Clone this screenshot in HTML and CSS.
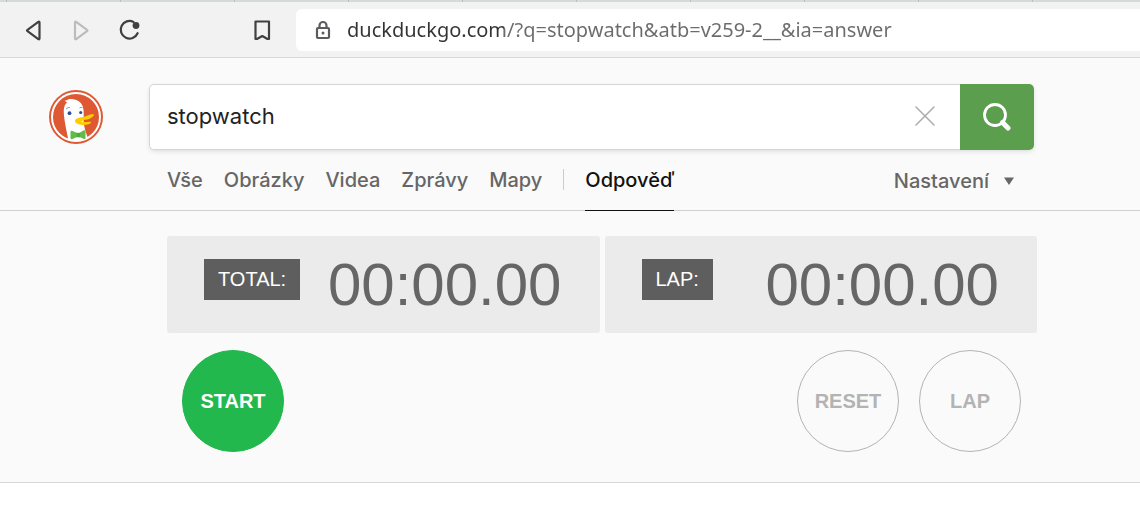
FILE: index.html
```html
<!DOCTYPE html>
<html lang="cs">
<head>
    <meta charset="UTF-8">
    <meta name="viewport" content="width=device-width, initial-scale=1.0">
    <title>stopwatch</title>
    <link rel="stylesheet" href="styles.css">
</head>
<body>
    <div class="browser">
        <div class="tab-strip"></div>
        <div class="toolbar">
            <div class="nav-buttons">
                <button class="icon-button" aria-label="Back">
                    <svg width="24" height="24" viewBox="0 0 24 24" fill="none" stroke="#404040" stroke-width="2.2" stroke-linejoin="round"><path d="M17.500 4.500v16q0 1.300-1.200.6L5.500 13.200q-1-.7 0-1.400L16.300 3.900q1.200-.7 1.200.6z"/></svg>
                </button>
                <button class="icon-button" aria-label="Forward" disabled>
                    <svg width="24" height="24" viewBox="0 0 24 24" fill="none" stroke="#bcbcbc" stroke-width="2.2" stroke-linejoin="round"><path d="M5 4.500v16q0 1.300 1.200.6L17 13.200q1-.7 0-1.400L6.200 3.900Q5 3.200 5 4.500z"/></svg>
                </button>
                <button class="icon-button" aria-label="Reload">
                    <svg width="24" height="24" viewBox="0 0 24 24" fill="none" stroke="#404040" stroke-width="2.200"><path d="M15.500 3.900A8.800 8.800 0 1 0 19.600 15.200" stroke-linecap="round"/><circle cx="18" cy="7.500" r="3.400" fill="#404040" stroke="none"/></svg>
                </button>
            </div>
            <button class="icon-button" aria-label="Bookmark">
                <svg width="24" height="24" viewBox="0 0 24 24" fill="none" stroke="#404040" stroke-width="2.200" stroke-linejoin="round"><path d="M4.500 3.500h13.500v17.500h-1.500L11.300 18 6 21H4.500z"/></svg>
            </button>
            <div class="address-bar">
                <svg width="16" height="20" viewBox="0 0 16 20" fill="none" stroke="#5c5c60" stroke-width="2.200"><rect x="2" y="8" width="12" height="10" rx="1"/><path d="M4.500 8V5.500a3.500 3.500 0 0 1 7 0V8"/><circle cx="8" cy="13" r="1.500" fill="#5c5c60" stroke="none"/></svg>
                <input class="address-input" type="text" aria-label="Address" value="duckduckgo.com/?q=stopwatch&amp;atb=v259-2__&amp;ia=answer">
            </div>
        </div>
    </div>

    <header class="header">
        <a class="logo" href="#" aria-label="DuckDuckGo">
            <svg width="54" height="54" viewBox="0 0 54 54">
                <circle cx="27" cy="27" r="27" fill="#de5833"/>
                <circle cx="27" cy="27" r="24" fill="none" stroke="#fff" stroke-width="2"/>
                <path d="M19.500 50.500C17 38 14.500 27 14.800 20c.2-3.500 1.400-6 3.200-7.500-.6-.8-1.500-1.200-2.500-1.500 1.500-1 3.500-1.200 5-.8-.6-.5-1.200-.8-2-1 7-.8 13 1.300 15.300 7.300 1.200 3.500 1 9 .7 14.500.5 6 2 11 4.500 17.500-6 3-13 4-19.500 2z" fill="#fff"/>
                <path d="M26 31c0-2.500 4.500-3.700 8-4 4-.6 6.500-3 9.500-3 3 .5.500 3-2 4.200-3 1.400-7 1.800-9.500 3.300 3.500 1.300 6.500 0 9.500.3 2 1-2 3.200-6 3.200-4.500 0-9.500-1.300-9.500-4z" fill="#fc0"/>
                <circle cx="20.500" cy="23.200" r="1.900" fill="#2d4f8e"/>
                <circle cx="31.700" cy="22.500" r="1.600" fill="#2d4f8e"/>
                <path d="M17 19q2-2 4-1.500M30.500 18q1.500-1.200 3-.3" fill="none" stroke="#8aa0c8"/>
                <path d="M21.500 42q0-2 2-1l4 1.700h3l4-2.200q2-.8 2 1v7q-1 1-2 .2L30.500 47H28l-4.500 2q-2 .5-2-1z" fill="#63bb47"/>
                <path d="M27.500 43h3.500v4.300h-3.500z" fill="#4dab3e"/>
            </svg>
        </a>
        <div class="header-main">
            <form class="search">
                <input class="search-input" type="text" name="q" aria-label="Search" value="stopwatch">
                <button class="search-clear" type="reset" aria-label="Clear">
                    <svg width="20" height="20" viewBox="0 0 20 20" stroke="#aaa" stroke-width="1.500" stroke-linecap="round"><path d="M1 1l18 18M19 1L1 19"/></svg>
                </button>
                <button class="search-submit" type="submit" aria-label="Search">
                    <svg width="28" height="28" viewBox="0 0 28 28" fill="none" stroke="#fff"><circle cx="12" cy="12" r="10.500" stroke-width="2.800"/><path d="M19.500 19.500l5.500 5.500" stroke-width="5" stroke-linecap="round"/></svg>
                </button>
            </form>
            <nav class="tabs">
                <a href="#">Vše</a>
                <a href="#">Obrázky</a>
                <a href="#">Videa</a>
                <a href="#">Zprávy</a>
                <a href="#">Mapy</a>
                <span class="divider"></span>
                <a class="active" href="#">Odpověď</a>
                <button class="settings" type="button">
                    Nastavení
                    <svg width="10" height="8" viewBox="0 0 10 8" fill="#666"><path d="M0 .5h10L5 8z"/></svg>
                </button>
            </nav>
        </div>
    </header>

    <main class="answer">
        <div class="stopwatch">
            <div class="displays">
                <div class="display">
                    <span class="display-label">TOTAL:</span>
                    <span class="time">00:00.00</span>
                </div>
                <div class="display">
                    <span class="display-label">LAP:</span>
                    <span class="time">00:00.00</span>
                </div>
            </div>
            <div class="controls">
                <button class="round-button start">START</button>
                <button class="round-button" disabled>RESET</button>
                <button class="round-button" disabled>LAP</button>
            </div>
        </div>
    </main>
</body>
</html>
```

FILE: styles.css
```css
* {
    box-sizing: border-box;
}
body {
    margin: 0;
    background-color: #fff;
    font-family: "Liberation Sans", Arial, sans-serif;
    color: #333;
}
button {
    font-family: inherit;
    padding: 0;
    border: none;
    background: none;
    cursor: pointer;
}
svg {
    display: block;
    flex-shrink: 0;
}

/* Browser chrome */
.browser {
    background-color: #f2f2f2;
    border-bottom: 1px solid #d5d7d8;
}
.tab-strip {
    height: 2px;
    background-image: linear-gradient(to right, #b9bec0 1px, #d5dadd 1px);
    background-size: 114px 2px;
    background-position: 6px 0;
}
.toolbar {
    display: flex;
    align-items: center;
    height: 55px;
    padding-left: 22px;
}
.nav-buttons {
    display: flex;
    gap: 24px;
    margin-right: 109px;
}
.address-bar {
    display: flex;
    flex: 1;
    align-items: center;
    gap: 16px;
    height: 42px;
    margin-left: 21px;
    padding-left: 19px;
    border-radius: 6px 0 0 6px;
    background-color: #fff;
}
.address-input {
    flex: 1;
    min-width: 0;
    padding: 0;
    border: none;
    outline: none;
    font-family: "Noto Sans", "Open Sans", sans-serif;
    font-size: 20px;
    line-height: 28px;
    /* dark host name, lighter path */
    background: linear-gradient(to right, #333 157px, #6b6b6b 157px);
    -webkit-background-clip: text;
    background-clip: text;
    color: transparent;
}

/* Search header */
.header {
    display: flex;
    padding: 26px 106px 0 49px;
    background-color: #fafafa;
    border-bottom: 1px solid #d0d0d0;
    font-family: Inter, "Open Sans", sans-serif;
}
.logo {
    margin: 6px 46px 0 0;
}
.header-main {
    flex: 1;
    max-width: 885px;
}
.search {
    display: flex;
    height: 66px;
    border-radius: 5px;
    background-color: #fff;
    box-shadow: 0 2px 4px rgba(0, 0, 0, 0.1);
}
.search-input {
    flex: 1;
    min-width: 0;
    padding: 0 17px 2px;
    border: 1px solid #d5d5d5;
    border-right: none;
    border-radius: 5px 0 0 5px;
    outline: none;
    background-color: #fff;
    color: #222;
    font-family: inherit;
    font-size: 22px;
}
.search-clear {
    display: flex;
    align-items: center;
    justify-content: center;
    width: 70px;
    padding-bottom: 2px;
    border: 1px solid #d5d5d5;
    border-width: 1px 0;
}
.search-submit {
    display: flex;
    align-items: center;
    justify-content: center;
    width: 74px;
    border-radius: 0 5px 5px 0;
    background-color: #5b9e4d;
}
.tabs {
    display: flex;
    gap: 21px;
    height: 61px;
    margin-bottom: -1px;
    padding: 0 20px 0 18px;
    font-size: 20px;
    font-weight: 500;
    line-height: 61px;
}
.tabs a {
    color: #666;
    text-decoration: none;
}
.tabs .active {
    color: #111;
    border-bottom: 1px solid #111;
}
.divider {
    width: 1px;
    height: 21px;
    margin-top: 19px;
    background-color: #ccc;
}
.settings {
    display: flex;
    align-items: center;
    gap: 15px;
    margin-left: auto;
    color: #666;
    font-size: inherit;
    font-weight: inherit;
}

/* Stopwatch */
.answer {
    padding: 25px 103px 30px 167px;
    background-color: #fafafa;
    border-bottom: 1px solid #d8d8d8;
}
.stopwatch {
    max-width: 870px;
}
.displays {
    display: flex;
    gap: 5px;
}
.display {
    display: flex;
    flex: 1;
    justify-content: space-between;
    align-items: flex-start;
    padding: 23px 38px 23px 37px;
    border-radius: 3px;
    background-color: #ebebeb;
}
.display-label {
    padding: 0 14px;
    background-color: #5e5e5e;
    color: #fff;
    font-size: 20px;
    line-height: 41px;
}
.time {
    color: #666;
    font-size: 60px;
    line-height: 51px;
}
.controls {
    display: flex;
    gap: 20px;
    padding: 17px 16px 0 15px;
}
.round-button {
    width: 102px;
    height: 102px;
    border: 1px solid #b3b3b3;
    border-radius: 50%;
    color: #b3b3b3;
    font-size: 20px;
    font-weight: bold;
}
.start {
    margin-right: auto;
    border-color: #22b84d;
    background-color: #22b84d;
    color: #fff;
}
```
